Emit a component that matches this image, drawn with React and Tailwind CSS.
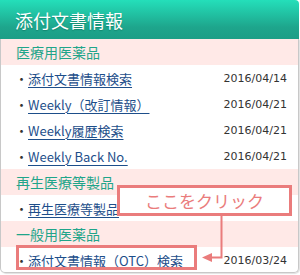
import React from "react";

const jp = { fontFamily: '"Noto Sans CJK JP", "Noto Sans", sans-serif' };
const dt = { fontFamily: '"DejaVu Sans", sans-serif' };

function Row({ label, date }) {
  return (
    <div className="h-[26px] flex items-center justify-between pl-[14px] pr-[11px]">
      <div className="flex items-center text-[13px] leading-none" style={jp}>
        <span className="text-[#333]">・</span>
        <span className="text-[#1d4e8a] underline underline-offset-[3px] decoration-[1px] whitespace-nowrap">{label}</span>
      </div>
      {date && <span className="text-[11px] text-[#333] leading-none" style={dt}>{date}</span>}
    </div>
  );
}

function Section({ label }) {
  return (
    <div className="h-[26px] flex items-center bg-[#ffe9e7] pl-[15px] text-[14px] text-[#1fa58a] leading-none" style={jp}>
      {label}
    </div>
  );
}

export default function App() {
  return (
    <div className="relative w-[300px] h-[275px] bg-white overflow-hidden">
      <div className="w-[299px]">
        <div
          className="h-[39px] flex items-center pl-[15px] rounded-tr-[4px] bg-[linear-gradient(to_bottom,#24dfba_0%,#1ea58c_70%,#1c9e86_100%)] text-white text-[18px] leading-none [text-shadow:0_1px_1px_rgba(0,80,60,0.35)]"
          style={jp}
        >
          添付文書情報
        </div>
        <div className="border-x border-b border-[#c8c8c8] rounded-b-[5px] h-[234px] shadow-[1px_1px_1px_rgba(0,0,0,0.12)]">
          <Section label="医療用医薬品" />
          <Row label="添付文書情報検索" date="2016/04/14" />
          <Row label="Weekly（改訂情報）" date="2016/04/21" />
          <Row label="Weekly履歴検索" date="2016/04/21" />
          <Row label="Weekly Back No." date="2016/04/21" />
          <Section label="再生医療等製品" />
          <Row label="再生医療等製品" />
          <Section label="一般用医薬品" />
          <Row label="添付文書情報（OTC）検索" date="2016/03/24" />
        </div>
      </div>

      <div className="absolute left-[16px] top-[245px] w-[181px] h-[25px] border-[3px] border-[#ea7c7c]" />
      <div
        className="absolute left-[117px] top-[185px] w-[175px] h-[31px] border-[3px] border-[#ea7c7c] bg-white flex items-center justify-center text-[17px] text-[#ea7c7c] leading-none"
        style={jp}
      >
        ここをクリック
      </div>
      <svg className="absolute left-0 top-0" width="300" height="275" viewBox="0 0 300 275">
        <path d="M221.5 215 V257.5 H210" stroke="#ea7c7c" strokeWidth="2" fill="none" />
        <polygon points="202,257.5 212,253 212,262" fill="#ea7c7c" />
      </svg>
    </div>
  );
}
